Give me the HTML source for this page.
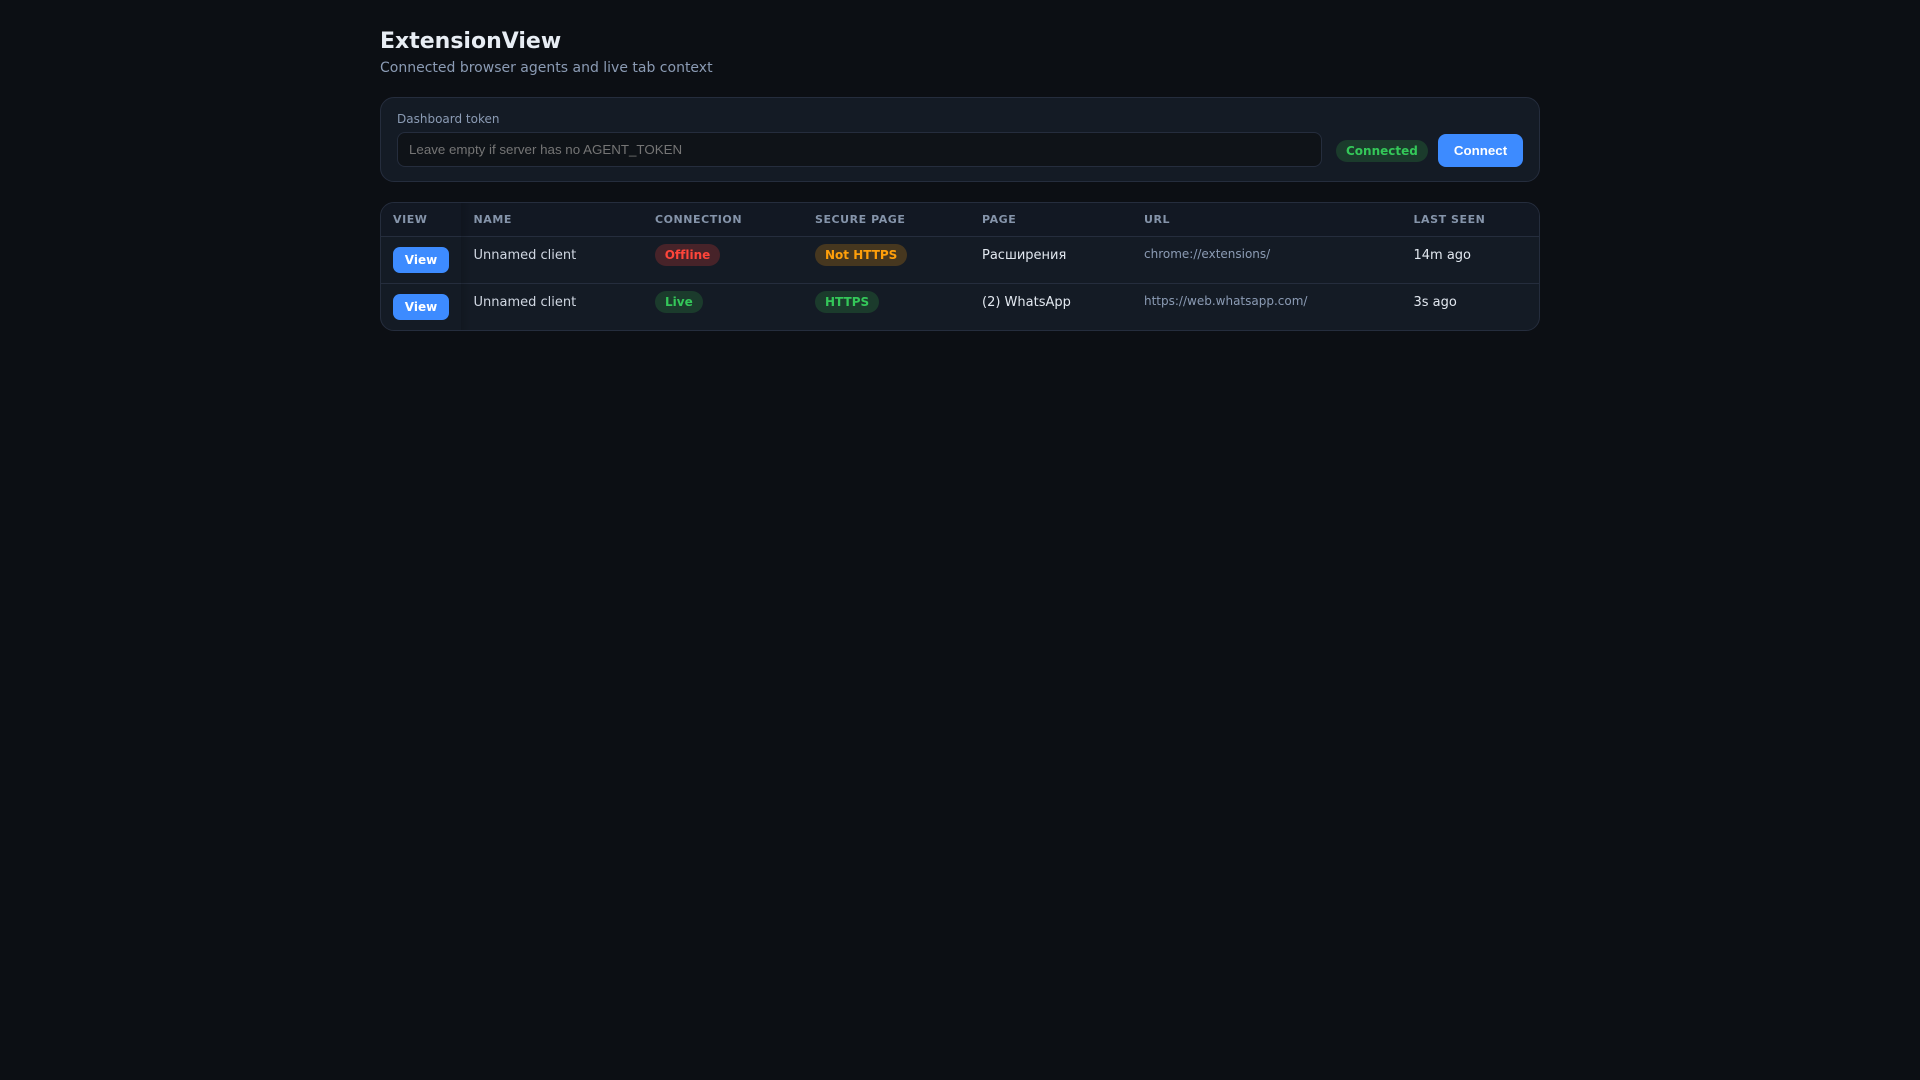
<!DOCTYPE html>
<html>
<head>
<meta charset="utf-8">
<style>
*{box-sizing:border-box}
html,body{margin:0;padding:0;width:1920px;height:1080px;overflow:hidden;background:#0c0f14;color:#e6edf3;font-family:"DejaVu Sans",sans-serif}
.wrap{position:absolute;left:380px;top:0;width:1160px}
h1{position:absolute;left:0;top:29px;margin:0;font-size:22px;line-height:26px;font-weight:700;color:#e8edf4;white-space:nowrap}
.sub{position:absolute;left:0;top:59px;font-size:14px;line-height:18px;color:#8b9bb4;white-space:nowrap}
.panel{position:absolute;left:0;top:97px;width:1160px;height:85px;background:#141b25;border:1px solid #252d3d;border-radius:14px}
.lbl{position:absolute;left:16px;top:13px;font-size:12px;line-height:16px;color:#8b9bb4}
.inp{position:absolute;left:16px;top:34px;width:925px;height:35px;background:#0f1318;border:1px solid #252d3d;border-radius:8px;font:13.33px/33px "Liberation Sans",sans-serif;color:#757575;padding-left:11px}
.pill{display:inline-block;font-size:12px;font-weight:700;line-height:14px;padding:4px 10px;border-radius:999px;white-space:nowrap;font-variant-ligatures:none}
.g{background:#1b3b2c;color:#34c759}
.r{background:#472329;color:#ff453a;width:65px;padding:4px 0;text-align:center}
.o{background:#46371f;color:#ff9f0a}
.panel .pill{position:absolute;left:955px;top:42px;height:22px}
.btn{position:absolute;left:1057px;top:36px;width:85px;height:33px;background:#3d8bff;border-radius:8px;color:#fff;font:700 13.33px/33px "Liberation Sans",sans-serif;text-align:center}
.tw{position:absolute;left:0;top:202px;width:1160px;height:129px;background:#141b25;border:1px solid #252d3d;border-radius:14px;overflow:hidden}
.row{position:absolute;left:0;width:1158px}
.head{top:0;height:34px;background:#121823;border-bottom:1px solid #252d3d}
.r1{top:34px;height:47px;border-bottom:1px solid #252d3d}
.r2{top:81px;height:46px}
.c{position:absolute;white-space:nowrap}
.th{font-size:11px;font-weight:700;letter-spacing:.55px;color:#8594aa;top:10px;line-height:14px}
.td{font-size:13px;line-height:16px;color:#e2e8f0;top:11px}
.nm{color:#d0d7e2}
.url{font-size:12px;line-height:15px;color:#8b9bb4;top:10px}
.pc{top:7px}
.vb{position:absolute;left:12px;top:10px;width:56px;height:26px;background:#3d8bff;border-radius:7px;color:#fff;font-size:12px;font-weight:700;line-height:26px;text-align:center}
.shade{position:absolute;left:80px;top:0;width:10px;height:127px;background:linear-gradient(to right,rgba(0,0,0,.14),rgba(0,0,0,0))}
</style>
</head>
<body>
<div class="wrap">
<h1>ExtensionView</h1>
<div class="sub">Connected browser agents and live tab context</div>
<div class="panel">
<div class="lbl">Dashboard token</div>
<div class="inp">Leave empty if server has no AGENT_TOKEN</div>
<span class="pill g">Connected</span>
<div class="btn">Connect</div>
</div>
<div class="tw">
<div class="row head">
<div class="c th" style="left:12px">VIEW</div>
<div class="c th" style="left:92.5px">NAME</div>
<div class="c th" style="left:274px">CONNECTION</div>
<div class="c th" style="left:434px">SECURE PAGE</div>
<div class="c th" style="left:601px">PAGE</div>
<div class="c th" style="left:763px">URL</div>
<div class="c th" style="left:1032.5px">LAST SEEN</div>
</div>
<div class="row r1">
<div class="vb">View</div>
<div class="c td nm" style="left:92.5px">Unnamed client</div>
<div class="c pc" style="left:274px"><span class="pill r">Offline</span></div>
<div class="c pc" style="left:434px"><span class="pill o">Not HTTPS</span></div>
<div class="c td" style="left:601px">Расширения</div>
<div class="c url" style="left:763px">chrome://extensions/</div>
<div class="c td" style="left:1032.5px">14m ago</div>
</div>
<div class="row r2">
<div class="vb">View</div>
<div class="c td nm" style="left:92.5px">Unnamed client</div>
<div class="c pc" style="left:274px"><span class="pill g">Live</span></div>
<div class="c pc" style="left:434px"><span class="pill g">HTTPS</span></div>
<div class="c td" style="left:601px">(2) WhatsApp</div>
<div class="c url" style="left:763px">https://web.whatsapp.com/</div>
<div class="c td" style="left:1032.5px">3s ago</div>
</div>
<div class="shade"></div>
</div>
</div>
</body>
</html>
